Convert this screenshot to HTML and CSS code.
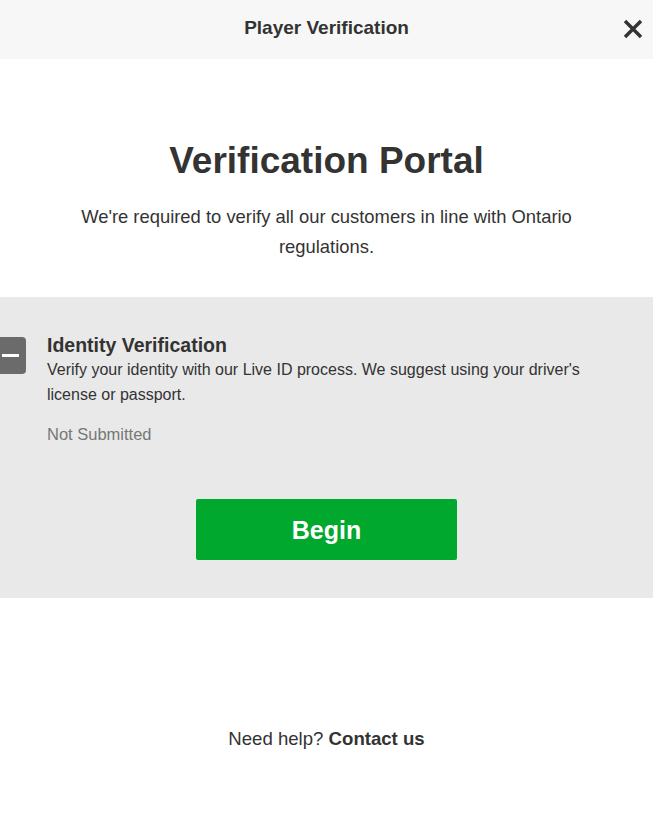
FILE: index.html
```html
<!DOCTYPE html>
<html lang="en">
<head>
    <meta charset="UTF-8">
    <meta name="viewport" content="width=device-width, initial-scale=1.0">
    <title>Player Verification</title>
    <link rel="stylesheet" href="styles.css">
</head>
<body>

<!-- Top Bar -->
<header class="top-bar">
    <h1>Player Verification</h1>
    <button class="close-btn" aria-label="Close">
        <svg width="20" height="20" viewBox="0 0 20 20">
            <path d="M2 2 L18 18 M18 2 L2 18" stroke="#333" stroke-width="3.4" fill="none"/>
        </svg>
    </button>
</header>

<!-- Intro -->
<section class="intro">
    <h2>Verification Portal</h2>
    <p>We're required to verify all our customers in line with Ontario regulations.</p>
</section>

<!-- Verification Step -->
<section class="step-panel">
    <div class="step">
        <div class="step-icon"><span></span></div>
        <div class="step-body">
            <h3>Identity Verification</h3>
            <p>Verify your identity with our Live ID process. We suggest using your driver's license or passport.</p>
            <div class="step-status">Not Submitted</div>
        </div>
    </div>
    <button class="begin-btn">Begin</button>
</section>

<!-- Help -->
<footer class="help">
    Need help? <a href="#">Contact us</a>
</footer>

</body>
</html>
```

FILE: styles.css
```css
/* General Styles */
body {
    font-family: 'Liberation Sans', Arial, sans-serif;
    margin: 0;
    color: #333;
    background-color: #fff;
}

/* Top Bar */
.top-bar {
    position: relative;
    height: 59px;
    background-color: #f7f7f7;
    display: flex;
    align-items: center;
    justify-content: center;
}

.top-bar h1 {
    margin: 0 0 3px;
    font-size: 19px;
    font-weight: 700;
    color: #333;
}

.close-btn {
    position: absolute;
    right: 10px;
    top: 19px;
    padding: 0;
    border: none;
    background: none;
    cursor: pointer;
    width: 20px;
    height: 20px;
}

/* Intro */
.intro {
    padding: 79px 40px 0;
    text-align: center;
}

.intro h2 {
    margin: 0 0 18px;
    font-size: 37px;
    line-height: 46px;
    font-weight: 700;
}

.intro p {
    margin: 0;
    font-size: 18.4px;
    line-height: 30px;
}

/* Step Panel */
.step-panel {
    margin-top: 35px;
    height: 301px;
    box-sizing: border-box;
    background-color: #e9e9e9;
    padding: 36px 0 0;
    text-align: center;
}

.step {
    display: flex;
    gap: 21px;
    text-align: left;
    padding-right: 60px;
}

.step-icon {
    flex: none;
    width: 37px;
    height: 37px;
    margin-left: -11px;
    margin-top: 4px;
    background-color: #6b6b6b;
    border-radius: 4px;
    display: flex;
    align-items: center;
    justify-content: flex-end;
}

.step-icon span {
    display: block;
    width: 17px;
    height: 3px;
    margin-right: 7px;
    background-color: #fff;
}

.step-body h3 {
    margin: 0;
    font-size: 19.5px;
    line-height: 24px;
    font-weight: 700;
}

.step-body p {
    margin: 0;
    font-size: 16px;
    line-height: 25px;
}

.step-status {
    margin-top: 15px;
    font-size: 16.5px;
    line-height: 25px;
    color: #777;
}

.begin-btn {
    margin-top: 52px;
    width: 261px;
    height: 61px;
    padding-top: 3px;
    border: none;
    border-radius: 2px;
    background-color: #00a82d;
    color: #fff;
    font-family: inherit;
    font-size: 25px;
    font-weight: 700;
    cursor: pointer;
}

/* Help */
.help {
    padding-top: 128px;
    text-align: center;
    font-size: 18.6px;
    line-height: 26px;
}

.help a {
    color: #333;
    font-weight: 700;
    text-decoration: none;
}
```
